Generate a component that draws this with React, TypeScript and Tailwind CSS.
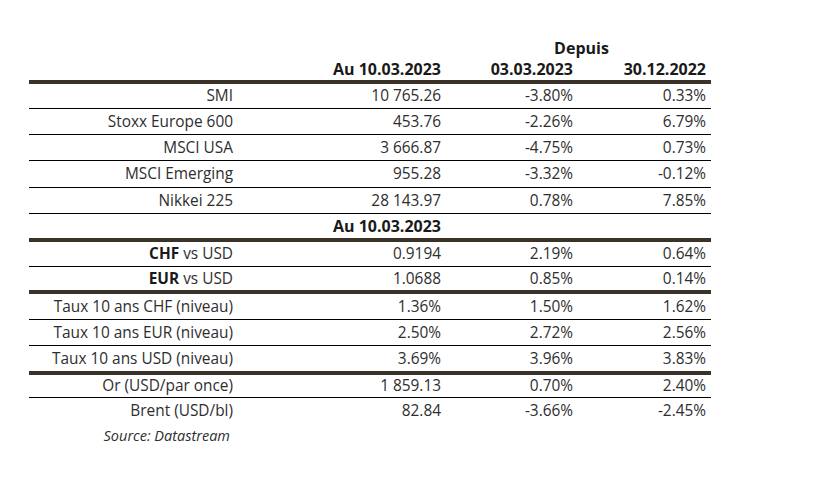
const rows = [
  { label: "SMI", a: "10 765.26", b: "-3.80%", c: "0.33%", h: "h-[25px]", thick: false },
  { label: "Stoxx Europe 600", a: "453.76", b: "-2.26%", c: "6.79%", h: "h-[26px]", thick: false },
  { label: "MSCI USA", a: "3 666.87", b: "-4.75%", c: "0.73%", h: "h-[26px]", thick: false },
  { label: "MSCI Emerging", a: "955.28", b: "-3.32%", c: "-0.12%", h: "h-[27px]", thick: false },
  { label: "Nikkei 225", a: "28 143.97", b: "0.78%", c: "7.85%", h: "h-[26px]", thick: false },
];

const fx = [
  { cur: "CHF", a: "0.9194", b: "2.19%", c: "0.64%", h: "h-[25px]", thick: false },
  { cur: "EUR", a: "1.0688", b: "0.85%", c: "0.14%", h: "h-[27px]", thick: true },
];

const rest = [
  { label: "Taux 10 ans CHF (niveau)", a: "1.36%", b: "1.50%", c: "1.62%", h: "h-[26px]", thick: false },
  { label: "Taux 10 ans EUR (niveau)", a: "2.50%", b: "2.72%", c: "2.56%", h: "h-[26px]", thick: false },
  { label: "Taux 10 ans USD (niveau)", a: "3.69%", b: "3.96%", c: "3.83%", h: "h-[29px]", thick: true },
  { label: "Or (USD/par once)", a: "1 859.13", b: "0.70%", c: "2.40%", h: "h-[23px]", thick: false },
];

const Row = ({
  label,
  a,
  b,
  c,
  h,
  thick,
  last,
}: {
  label: React.ReactNode;
  a: string;
  b: string;
  c: string;
  h: string;
  thick: boolean;
  last?: boolean;
}) => (
  <div
    className={`flex items-center ${h} ${
      last ? "" : thick ? "border-b-4 border-[#3a3129]" : "border-b border-black"
    }`}
  >
    <div className="w-[211px] pr-[7px] text-right whitespace-nowrap">{label}</div>
    <div className="w-[206px] pr-[5px] text-right">{a}</div>
    <div className="w-[132px] pr-[5px] text-right">{b}</div>
    <div className="w-[133px] pr-[5px] text-right">{c}</div>
  </div>
);

export default function App() {
  return (
    <div
      className="w-[817px] h-[482px] bg-white pt-[38px] pl-[29px] text-[15.4px] text-[#2e2e2e]"
      style={{ fontFamily: '"Open Sans", "Noto Sans", sans-serif' }}
    >
      <div className="w-[682px]">
        {/* Header */}
        <div className="flex h-[20px] items-center font-bold text-[16px] text-[#1a1a1a]">
          <div className="w-[417px]" />
          <div className="w-[265px] text-center pl-[6px]">Depuis</div>
        </div>
        <div className="flex h-[26px] items-center border-b-4 border-[#3a3129] font-bold text-[16px] text-[#1a1a1a]">
          <div className="w-[211px]" />
          <div className="w-[206px] pr-[5px] text-right">Au 10.03.2023</div>
          <div className="w-[132px] pr-[5px] text-right">03.03.2023</div>
          <div className="w-[133px] pr-[5px] text-right">30.12.2022</div>
        </div>

        {rows.map((r) => (
          <Row key={r.label} {...r} />
        ))}

        <div className="flex h-[28px] items-center border-b-4 border-[#3a3129] font-bold text-[16px] text-[#1a1a1a]">
          <div className="w-[211px]" />
          <div className="w-[206px] pr-[5px] text-right">Au 10.03.2023</div>
        </div>

        {fx.map((r) => (
          <Row
            key={r.cur}
            label={
              <>
                <span className="font-bold text-[#1a1a1a]">{r.cur}</span> vs USD
              </>
            }
            a={r.a}
            b={r.b}
            c={r.c}
            h={r.h}
            thick={r.thick}
          />
        ))}

        {rest.map((r) => (
          <Row key={r.label} {...r} />
        ))}

        <Row label="Brent (USD/bl)" a="82.84" b="-3.66%" c="-2.45%" h="h-[26px]" thick={false} last />

        <div className="flex h-[24px] items-center">
          <div className="w-[211px] pr-[10px] text-right italic text-[14.5px]">Source: Datastream</div>
        </div>
      </div>
    </div>
  );
}
